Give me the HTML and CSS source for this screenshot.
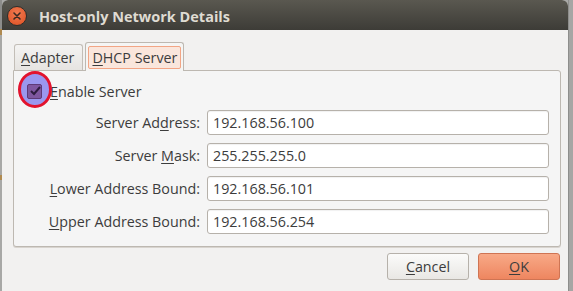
FILE: index.html
```html
<!DOCTYPE html>
<html>
<head>
<meta charset="utf-8">
<link rel="stylesheet" href="styles.css">
</head>
<body>
<div class="desk">
  <div class="strip-left"></div>
  <div class="window">
    <div class="titlebar">
      <div class="close"><svg width="18" height="18" viewBox="0 0 18 18"><path d="M6 6 L12 12 M12 6 L6 12" stroke="#3a2a22" stroke-width="1.6" stroke-linecap="round"/></svg></div>
      <div class="title">Host-only Network Details</div>
    </div>
    <div class="content">
      <div class="tabs">
        <div class="tab"><span class="u">A</span>dapter</div>
        <div class="tab active"><div class="focus"><span class="u">D</span>HCP Server</div></div>
      </div>
      <div class="panel">
        <div class="check-row">
          <div class="checkbox">
            <div class="mark"></div>
            <div class="box"><svg width="12" height="12" viewBox="0 0 12 12"><path d="M2 6 L5 9 L11 2" fill="none" stroke="#2e1c40" stroke-width="2"/></svg></div>
          </div>
          <span class="check-label"><span class="u">E</span>nable Server</span>
        </div>
        <div class="form">
          <label class="lbl">Server Ad<span class="u">d</span>ress:</label>
          <div class="field">192.168.56.100</div>
          <label class="lbl">Server <span class="u">M</span>ask:</label>
          <div class="field">255.255.255.0</div>
          <label class="lbl"><span class="u">L</span>ower Address Bound:</label>
          <div class="field">192.168.56.101</div>
          <label class="lbl"><span class="u">U</span>pper Address Bound:</label>
          <div class="field">192.168.56.254</div>
        </div>
      </div>
      <div class="buttons">
        <div class="btn"><span class="u">C</span>ancel</div>
        <div class="btn ok"><span class="u">O</span>K</div>
      </div>
    </div>
  </div>
  <div class="strip-right"></div>
</div>
</body>
</html>
```
FILE: styles.css
```css
* { box-sizing: border-box; }
html, body { margin: 0; padding: 0; }
body {
  width: 573px; height: 291px; overflow: hidden;
  background: #a9a9a7;
  font-family: "Open Sans", "DejaVu Sans", sans-serif;
  font-size: 14.3px;
  color: #3c3c3c;
}
.desk { display: flex; height: 291px; }
.strip-left {
  width: 2px;
  background: linear-gradient(#8d8d8b 0 10%, #b08a50 10% 12%, #a8a8a6 12% 60%, #b08a50 60% 62%, #a8a8a6 62%);
}
.strip-right { width: 5px; background: #a6a6a4; border-left: 1px solid #8e8e8c; }
.window {
  width: 566px;
  display: flex; flex-direction: column;
  background: #f2f1f0;
  border-radius: 6px 6px 0 0;
  overflow: hidden;
}
.titlebar {
  height: 30px; flex: none;
  background: linear-gradient(#5a5850, #3d3c37);
  display: flex; align-items: center;
  padding-left: 5px;
}
.close {
  width: 20px; height: 20px; border-radius: 50%;
  background: radial-gradient(circle at 50% 35%, #f07a50, #dc4f22);
  border: 1px solid #2f2e2a;
  display: flex; align-items: center; justify-content: center;
  margin-top: 2px;
}
.title {
  margin-left: 12px; margin-top: 2px;
  color: #dfdbd2; font-weight: bold; font-size: 14.5px;
  font-family: "Open Sans", sans-serif;
}
.content { padding: 11px 8px 0 11px; display: flex; flex-direction: column; }
.tabs { display: flex; align-items: flex-end; height: 29px; padding-left: 1px; }
.tab {
  height: 26px; padding: 0 8px 0 6px;
  border: 1px solid #c3beb7; border-bottom: none;
  border-radius: 3px 3px 0 0;
  background: linear-gradient(#f4f3f2, #e6e4e1);
  display: flex; align-items: center;
  margin-right: 2px;
}
.tab.active {
  height: 29px; padding: 3px 2px 2px 2px;
  background: #f5f5f4; border-color: #bdb8b1;
  margin-bottom: -1px; position: relative; z-index: 1;
}
.focus {
  height: 100%; padding: 0 3px;
  border: 1px solid #f2a585; border-radius: 2px;
  background: #fae6dc;
  display: flex; align-items: center;
}
.panel {
  height: 177px; width: 548px;
  border: 1px solid #bdb8b1; border-radius: 0 3px 3px 3px;
  background: #f5f5f5;
  box-shadow: 0 1px 0 #d8d4cf;
  padding: 7px 11px 0 6px;
}
.check-row { display: flex; align-items: center; height: 26px; }
.checkbox { position: relative; width: 15px; height: 15px; margin-left: 7px; margin-right: 8px; }
.mark {
  position: absolute; left: -9px; top: -13px; width: 34px; height: 37px;
  border-radius: 50%;
  background: #9b97ef;
  border: 3px solid #e2132e;
}
.box {
  position: relative;
  width: 15px; height: 15px; border-radius: 2px;
  background: #7f57a0; border: 1px solid #5e3a78;
  display: flex; align-items: center; justify-content: center;
}
.form {
  display: grid; grid-template-columns: 180px 342px;
  column-gap: 7px; row-gap: 8px;
  margin-top: 6px; align-items: center;
}
.lbl { text-align: right; }
.field {
  height: 25px; border: 1px solid #b6b1aa; border-radius: 3px;
  background: #fff; padding: 0 5px;
  display: flex; align-items: center;
  box-shadow: inset 0 1px 1px rgba(0,0,0,0.06);
}
.buttons { display: flex; justify-content: flex-end; gap: 9px; margin-top: 6px; }
.btn {
  width: 82px; height: 27px; border-radius: 3px;
  border: 1px solid #b6b1aa;
  background: linear-gradient(#fbfbfa, #e9e7e4);
  display: flex; align-items: center; justify-content: center;
}
.btn.ok {
  border-color: #cf7453;
  background: linear-gradient(#f8a987, #ee8660);
}
.u { text-decoration: underline; text-underline-offset: 2px; }
```
